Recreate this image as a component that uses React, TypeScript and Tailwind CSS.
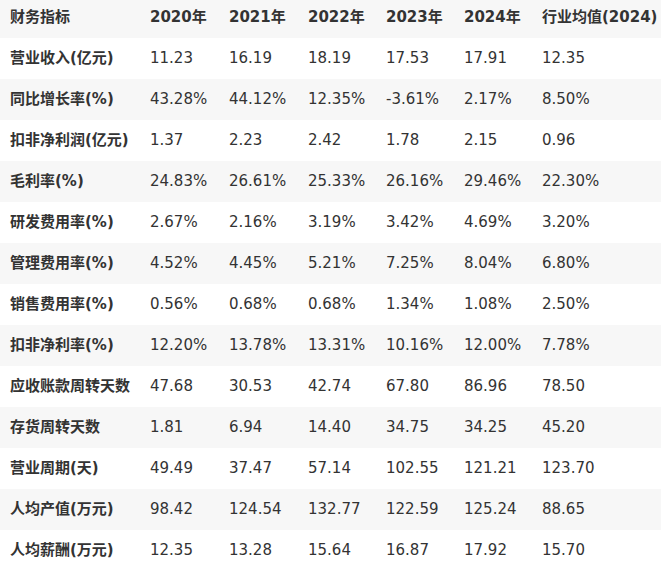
import React from "react";

const header = ["财务指标", "2020年", "2021年", "2022年", "2023年", "2024年", "行业均值(2024)"];
const rows: string[][] = [
  ["营业收入(亿元)", "11.23", "16.19", "18.19", "17.53", "17.91", "12.35"],
  ["同比增长率(%)", "43.28%", "44.12%", "12.35%", "-3.61%", "2.17%", "8.50%"],
  ["扣非净利润(亿元)", "1.37", "2.23", "2.42", "1.78", "2.15", "0.96"],
  ["毛利率(%)", "24.83%", "26.61%", "25.33%", "26.16%", "29.46%", "22.30%"],
  ["研发费用率(%)", "2.67%", "2.16%", "3.19%", "3.42%", "4.69%", "3.20%"],
  ["管理费用率(%)", "4.52%", "4.45%", "5.21%", "7.25%", "8.04%", "6.80%"],
  ["销售费用率(%)", "0.56%", "0.68%", "0.68%", "1.34%", "1.08%", "2.50%"],
  ["扣非净利率(%)", "12.20%", "13.78%", "13.31%", "10.16%", "12.00%", "7.78%"],
  ["应收账款周转天数", "47.68", "30.53", "42.74", "67.80", "86.96", "78.50"],
  ["存货周转天数", "1.81", "6.94", "14.40", "34.75", "34.25", "45.20"],
  ["营业周期(天)", "49.49", "37.47", "57.14", "102.55", "121.21", "123.70"],
  ["人均产值(万元)", "98.42", "124.54", "132.77", "122.59", "125.24", "88.65"],
  ["人均薪酬(万元)", "12.35", "13.28", "15.64", "16.87", "17.92", "15.70"],
];

export default function App() {
  return (
    <div
      className="w-[661px] h-[566px] overflow-hidden bg-white text-[#333333] text-[15px]"
      style={{ fontFamily: '"DejaVu Sans", "Noto Sans CJK SC", sans-serif' }}
    >
      <table className="w-[661px] table-fixed border-collapse -mt-[3px]">
        <colgroup>
          <col className="w-[140px]" />
          <col className="w-[79px]" />
          <col className="w-[79px]" />
          <col className="w-[78px]" />
          <col className="w-[78px]" />
          <col className="w-[78px]" />
          <col className="w-[129px]" />
        </colgroup>
        <thead>
          <tr className="h-[41px] bg-[#f7f7f7]">
            {header.map((h, i) => (
              <th key={i} className="pl-[10px] pr-0 text-left font-bold whitespace-nowrap align-middle">
                {h}
              </th>
            ))}
          </tr>
        </thead>
        <tbody>
          {rows.map((r, ri) => (
            <tr key={ri} className={ri % 2 === 0 ? "h-[41px] bg-white" : "h-[41px] bg-[#f7f7f7]"}>
              {r.map((c, ci) => (
                <td
                  key={ci}
                  className={
                    ci === 0
                      ? "pl-[10px] pr-0 font-bold whitespace-nowrap align-middle"
                      : "pl-[10px] pr-0 whitespace-nowrap align-middle"
                  }
                >
                  {c}
                </td>
              ))}
            </tr>
          ))}
        </tbody>
      </table>
    </div>
  );
}
